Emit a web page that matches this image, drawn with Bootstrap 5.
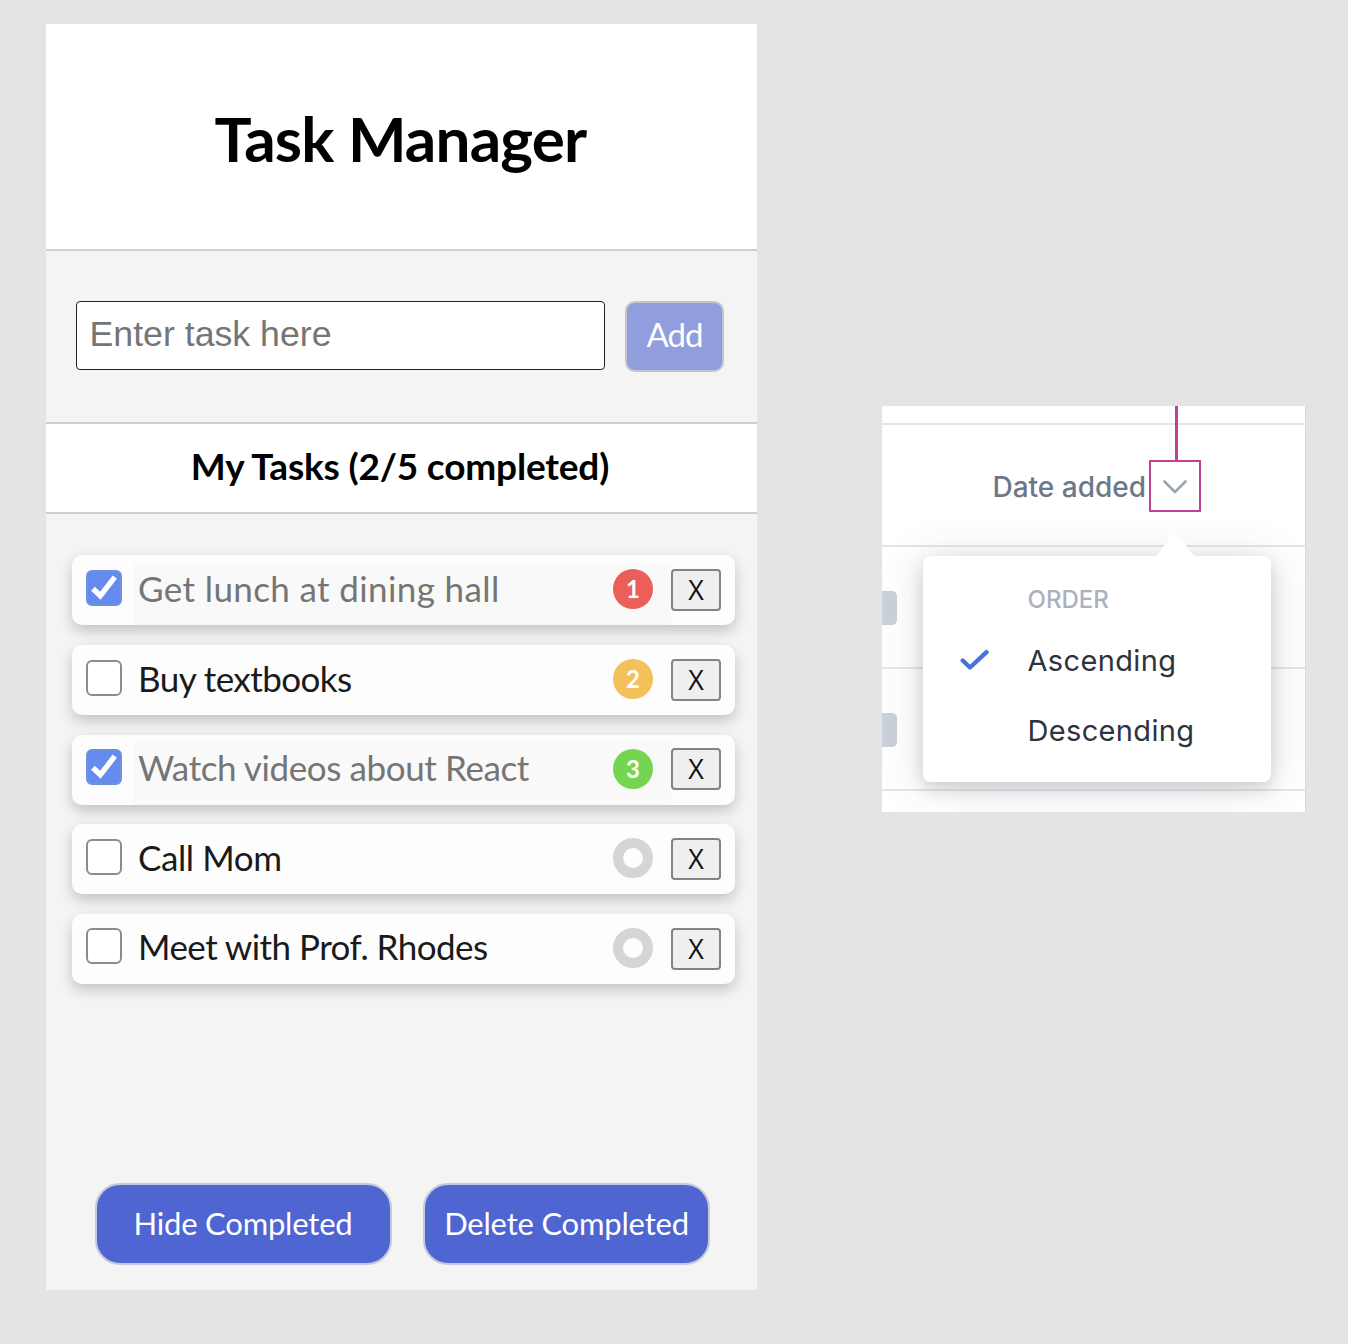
<!DOCTYPE html>
<html lang="en">
<head>
<meta charset="utf-8">
<meta name="viewport" content="width=device-width, initial-scale=1">
<title>Task Manager</title>
<link href="https://cdn.jsdelivr.net/npm/bootstrap@5.3.0/dist/css/bootstrap.min.css" rel="stylesheet">
<style>
  body { background: #e4e4e4; height: 1344px; overflow: hidden; font-family: Lato, "Noto Sans", sans-serif; color: #1a1a1a; }
  .board { padding: 24px 42px 0 46px; }

  /* Task manager */
  .app { width: 711px; height: 1266px; background: #f4f4f4; }
  .app-head { height: 227px; padding: 3px 2px 0 0; border-bottom: 2px solid #cfcfcf; background: #fff; }
  .app-title { font-size: 62px; font-weight: 700; letter-spacing: -.8px; line-height: 1; color: #000; }
  .entry { height: 173px; padding: 50px 32px 0 30px; gap: 20px; border-bottom: 2px solid #cfcfcf; }
  .entry .form-control { width: 529px; height: 69px; border: 1px solid #222; border-radius: 4px; padding: 0 12.5px 2px; font: 35.7px "Liberation Sans", Arial, sans-serif; }
  .entry .form-control::placeholder { color: #757575; opacity: 1; }
  .btn-add { width: 99px; height: 71px; border: 2px solid #c4c5cc; border-radius: 10px; background: #919ede; color: #fff; font-size: 33px; letter-spacing: -.9px; line-height: 1; padding: 0 0 5px; }
  .count-bar { height: 90px; padding: 0 3px 5px 0; border-bottom: 2px solid #cfcfcf; background: #fff; }
  .count-text { font-size: 37px; font-weight: 700; letter-spacing: -.18px; line-height: 1; color: #000; }
  .tasks { padding: 41.4px 22px 0 26px; gap: 19.65px; }
  .task { height: 70px; border-radius: 10px; background: #fdfdfd; box-shadow: 0 6px 14px rgba(0,0,0,.2); padding: 0 14px; }
  .task .form-check-input { width: 36px; height: 36px; margin: 14.5px 12px 0 0; border: 2px solid #8c8c8c; border-radius: 6px; background-color: #fff; flex: none; }
  .task .form-check-input:checked { background-color: #658bee; border-color: #6f8fe0; background-image: none; }
  .tick { position: absolute; left: 14px; top: 14.5px; width: 36px; height: 36px; pointer-events: none; }
  .task-main { width: 537px; padding-left: 4px; margin-top: 7.5px; height: 62.5px; }
  .task-main.done { background: #f9f9f9; color: #757575; }
  .task-name { font-size: 35px; line-height: 51px; letter-spacing: -.4px; white-space: nowrap; }
  .task:nth-child(1) .task-name { letter-spacing: .38px; }
  .task:nth-child(2) .task-name, .task:nth-child(5) .task-name { letter-spacing: -.55px; }
  .prio { width: 40px; height: 40px; margin: 6.5px 18px 0 0; font-size: 24px; font-weight: 700; line-height: 1; color: #fff; }
  .prio-1 { background: #eb5f5a; } .prio-2 { background: #f4c05a; } .prio-3 { background: #76d550; }
  .prio-none { border: 10px solid #d5d5d5; }
  .btn-x { width: 50px; height: 42px; margin-top: 13.8px; padding: 0 0 1px; border: 2px solid #838383; border-radius: 4px; background: #efefef; font: 27px/1 "Open Sans", sans-serif; color: #111; }
  .actions { padding: 0 47px 25px 48.500px; }
  .btn-act { height: 82px; border: 2px solid #c3c8dd; border-radius: 25px; background: #4f66d2; color: #fff; font-size: 31px; letter-spacing: -.2px; line-height: 1; padding: 0 0 2px; white-space: nowrap; }

  /* Sort menu */
  .sheet { width: 424px; height: 406px; margin-top: 382px; background: #fff; border-right: 1px solid #d9d9db; font-family: Inter, "Noto Sans", sans-serif; overflow: hidden; }
  .sheet-row { height: 122px; border-bottom: 2px solid #e6e6ea; }
  .sheet-row.lead-in { height: 19px; }
  .chip { width: 15px; height: 34.5px; margin-top: 1.5px; border-radius: 0 5px 5px 0; background: #cbd1da; }
  .sort-label { font-size: 28px; font-weight: 500; line-height: 1; color: #6b788a; padding: 4px 0 0 110.5px; width: 266.500px; white-space: nowrap; }
  .sort-toggle { width: 52px; height: 52px; border: 2px solid #c2409a; margin-top: 2px; }
  .pin-line { position: absolute; left: 293px; top: 0; width: 2.5px; height: 54px; background: #c2409a; }
  .menu { position: absolute; left: 40.5px; top: 150px; width: 348.5px; height: 226px; border-radius: 8px; background: #fff; padding: 19px 0 0; box-shadow: 0 6px 16px rgba(60,60,80,.18), 0 4px 44px rgba(60,60,80,.17); }
  .menu-arrow { position: absolute; left: 232px; top: -24px; width: 40px; height: 25px; }
  .menu-head { font-size: 24px; font-weight: 500; line-height: 50px; color: #a9b1bd; padding-left: 105px; }
  .menu-item { height: 70px; font-size: 29px; line-height: 1; letter-spacing: .35px; color: #2e333d; }
  .menu-mark { width: 105px; padding-left: 37px; }
</style>
</head>
<body>
<main class="board d-flex justify-content-between align-items-start">
  <section class="app d-flex flex-column">
    <header class="app-head d-flex align-items-center justify-content-center">
      <h1 class="app-title m-0">Task Manager</h1>
    </header>
    <form class="entry d-flex align-items-start">
      <input type="text" class="form-control" placeholder="Enter task here">
      <button type="button" class="btn btn-add">Add</button>
    </form>
    <div class="count-bar d-flex align-items-center justify-content-center">
      <h2 class="count-text m-0">My Tasks (2/5 completed)</h2>
    </div>
    <div class="tasks d-flex flex-column">
      <div class="task position-relative d-flex align-items-start">
        <input class="form-check-input" type="checkbox" checked>
        <svg class="tick" viewBox="0 0 36 36"><path d="M7 18.800 14.300 25.800 28.800 7.200" fill="none" stroke="#fff" stroke-width="5.400"/></svg>
        <div class="task-main done d-flex justify-content-between align-items-start">
          <span class="task-name">Get lunch at dining hall</span>
          <span class="prio prio-1 rounded-circle d-flex align-items-center justify-content-center">1</span>
        </div>
        <button type="button" class="btn btn-x">X</button>
      </div>
      <div class="task position-relative d-flex align-items-start">
        <input class="form-check-input" type="checkbox">
        <div class="task-main d-flex justify-content-between align-items-start">
          <span class="task-name">Buy textbooks</span>
          <span class="prio prio-2 rounded-circle d-flex align-items-center justify-content-center">2</span>
        </div>
        <button type="button" class="btn btn-x">X</button>
      </div>
      <div class="task position-relative d-flex align-items-start">
        <input class="form-check-input" type="checkbox" checked>
        <svg class="tick" viewBox="0 0 36 36"><path d="M7 18.800 14.300 25.800 28.800 7.200" fill="none" stroke="#fff" stroke-width="5.400"/></svg>
        <div class="task-main done d-flex justify-content-between align-items-start">
          <span class="task-name">Watch videos about React</span>
          <span class="prio prio-3 rounded-circle d-flex align-items-center justify-content-center">3</span>
        </div>
        <button type="button" class="btn btn-x">X</button>
      </div>
      <div class="task position-relative d-flex align-items-start">
        <input class="form-check-input" type="checkbox">
        <div class="task-main d-flex justify-content-between align-items-start">
          <span class="task-name">Call Mom</span>
          <span class="prio prio-none rounded-circle"></span>
        </div>
        <button type="button" class="btn btn-x">X</button>
      </div>
      <div class="task position-relative d-flex align-items-start">
        <input class="form-check-input" type="checkbox">
        <div class="task-main d-flex justify-content-between align-items-start">
          <span class="task-name">Meet with Prof. Rhodes</span>
          <span class="prio prio-none rounded-circle"></span>
        </div>
        <button type="button" class="btn btn-x">X</button>
      </div>
    </div>
    <div class="actions d-flex justify-content-between mt-auto">
      <button type="button" class="btn btn-act" style="width:297px">Hide Completed</button>
      <button type="button" class="btn btn-act" style="width:287px">Delete Completed</button>
    </div>
  </section>

  <section class="sheet position-relative">
    <div class="sheet-row lead-in"></div>
    <div class="sheet-row d-flex align-items-center">
      <span class="sort-label">Date added</span>
      <span class="sort-toggle d-flex align-items-center justify-content-center">
        <svg width="26" height="16" viewBox="0 0 26 16"><path d="M2.500 3.500 13 14 23.500 3.500" fill="none" stroke="#9aa2ae" stroke-width="2.600" stroke-linecap="round" stroke-linejoin="round"/></svg>
      </span>
    </div>
    <div class="sheet-row d-flex align-items-center"><span class="chip"></span></div>
    <div class="sheet-row d-flex align-items-center"><span class="chip"></span></div>
    <span class="pin-line"></span>
    <div class="menu">
      <svg class="menu-arrow" viewBox="0 0 40 25"><path d="M0 25V24Q2 23 4 20.500L17.500 2Q20-1 22.500 2L36 20.500Q38 23 40 24V25Z" fill="#fff"/></svg>
      <div class="menu-head">ORDER</div>
      <div class="menu-item d-flex align-items-center">
        <span class="menu-mark"><svg class="d-block" width="30" height="24" viewBox="0 0 30 24"><path d="M2.700 12.500 10 19.500 26.500 4.200" fill="none" stroke="#4673d9" stroke-width="4.400" stroke-linecap="round" stroke-linejoin="round"/></svg></span>
        <span>Ascending</span>
      </div>
      <div class="menu-item d-flex align-items-center">
        <span class="menu-mark"></span>
        <span>Descending</span>
      </div>
    </div>
  </section>
</main>
<script src="https://cdn.jsdelivr.net/npm/bootstrap@5.3.0/dist/js/bootstrap.bundle.min.js"></script>
</body>
</html>
